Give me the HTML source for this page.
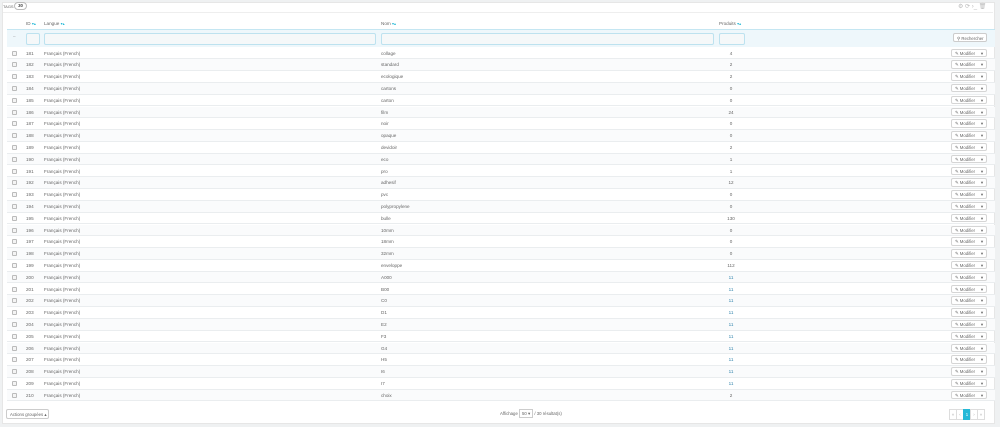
<!DOCTYPE html><html><head><meta charset="utf-8"><style>
body{margin:0;width:1000px;height:427px;background:#eff1f2;font-family:"Liberation Sans",sans-serif;font-size:4.6px;color:#666;position:relative;overflow:hidden}
.panel{position:absolute;left:2px;top:2px;width:993px;height:422px;background:#fff;border:1px solid #e6e6e6;box-sizing:border-box}
.a{position:absolute;white-space:nowrap}
.row{position:absolute;left:7px;width:988px;height:11.8px;border-bottom:1px solid #eaedef;box-sizing:border-box}
.row:nth-child(even){background:#fafbfc}
.row span{position:absolute;top:3px;line-height:6px}
.cb{left:5px;top:3px!important;width:3px;height:3px;border:1px solid #bbb;border-radius:1px;background:#f4f4f4}
.btn{position:absolute;left:944px;top:1px!important;width:36px;height:8.5px;border:1px solid #d5d5d5;border-radius:2px;background:#fff;box-sizing:border-box;font-size:4.3px;line-height:7px!important;padding-left:3px;color:#666}
.btn:after{content:"▾";position:absolute;right:3px;top:0}
.s{color:#25b9d7;font-size:4px}
.pg{width:6px;height:9px;border:1px solid #ddd;text-align:center;line-height:9px;color:#aaa;margin-left:-1px}
</style></head><body>
<div class="panel"></div>
<div class="a" style="left:3px;top:3.5px;font-size:4px">TAGS</div>
<div class="a" style="left:14px;top:2px;width:11px;height:6px;border:1px solid #bbb;border-radius:4px;font-size:4.3px;line-height:6px;text-align:center;font-weight:bold;color:#444">30</div>
<div class="a" style="left:3px;top:12px;width:990px;border-top:1px solid #eee"></div>
<div class="a" style="left:958px;top:3px;color:#bbb;font-size:6px">⚙ ⟳ ›_ 🗑</div>
<div class="a" style="left:26px;top:21px">ID <span class="s">▾▴</span></div>
<div class="a" style="left:44px;top:21px">Langue <span class="s">▾▴</span></div>
<div class="a" style="left:381px;top:21px">Nom <span class="s">▾▴</span></div>
<div class="a" style="left:719px;top:21px">Produits <span class="s">▾▴</span></div>
<div class="a" style="left:7px;top:29px;width:988px;height:18px;background:#eef7fb;border-top:1px solid #c4e6f2;box-sizing:border-box"></div>
<div class="a" style="left:13px;top:34px;color:#999">–</div>
<div class="a" style="left:26px;top:33px;width:12px;height:10px;border:1px solid #bde2ef;border-radius:2px;background:#f5f8f9"></div>
<div class="a" style="left:44px;top:33px;width:330px;height:10px;border:1px solid #bde2ef;border-radius:2px;background:#f5f8f9"></div>
<div class="a" style="left:381px;top:33px;width:331px;height:10px;border:1px solid #bde2ef;border-radius:2px;background:#f5f8f9"></div>
<div class="a" style="left:719px;top:33px;width:24px;height:10px;border:1px solid #bde2ef;border-radius:2px;background:#f5f8f9"></div>
<div class="a" style="left:953px;top:33px;width:34px;height:9px;border:1px solid #ccc;border-radius:2px;background:#fff;line-height:9px;font-size:4.3px;padding-left:3px;box-sizing:border-box">⚲ Rechercher</div>
<div id="rows"></div>
<div class="a" style="left:6px;top:409px;width:43px;height:10px;border:1px solid #ccc;border-radius:2px;line-height:10px;padding-left:3px;box-sizing:border-box;font-size:4.3px">Actions groupées ▴</div>
<div class="a" style="left:500px;top:411px;font-size:4.3px">Affichage <span style="border:1px solid #ccc;padding:1px 2px">50 ▾</span> / 30 résultat(s)</div>
<div class="a" style="left:950px;top:409px;font-size:4.3px;display:flex">
<span class="pg">«</span><span class="pg">‹</span><span class="pg" style="background:#25b9d7;border-color:#25b9d7;color:#fff">1</span><span class="pg">›</span><span class="pg">»</span></div>
<script>
var n="collage standard ecologique cartons carton film noir opaque devidoir eco pro adhesif pvc polypropylene bulle 10mm 18mm 32mm enveloppe A000 B00 C0 D1 E2 F3 G4 H5 I6 I7 choix".split(" ");
var p=[4,2,2,0,0,24,0,0,2,1,1,12,0,0,130,0,0,0,112,11,11,11,11,11,11,11,11,11,11,2];
var h="";for(var i=0;i<30;i++){var t=47.5+i*11.8;h+='<div class="row" style="top:'+t+'px"><span class="cb"></span><span style="left:19px">'+(181+i)+'</span><span style="left:37px">Français (French)</span><span style="left:374px">'+n[i]+'</span><span style="left:724px;width:0;text-align:center;'+(p[i]==11?'color:#3586ae':'')+'"><i style="font-style:normal;position:absolute;left:-5px;width:10px;text-align:center">'+p[i]+'</i></span><span class="btn">✎ Modifier</span></div>';}
document.getElementById("rows").innerHTML=h;
</script>
</body></html>
